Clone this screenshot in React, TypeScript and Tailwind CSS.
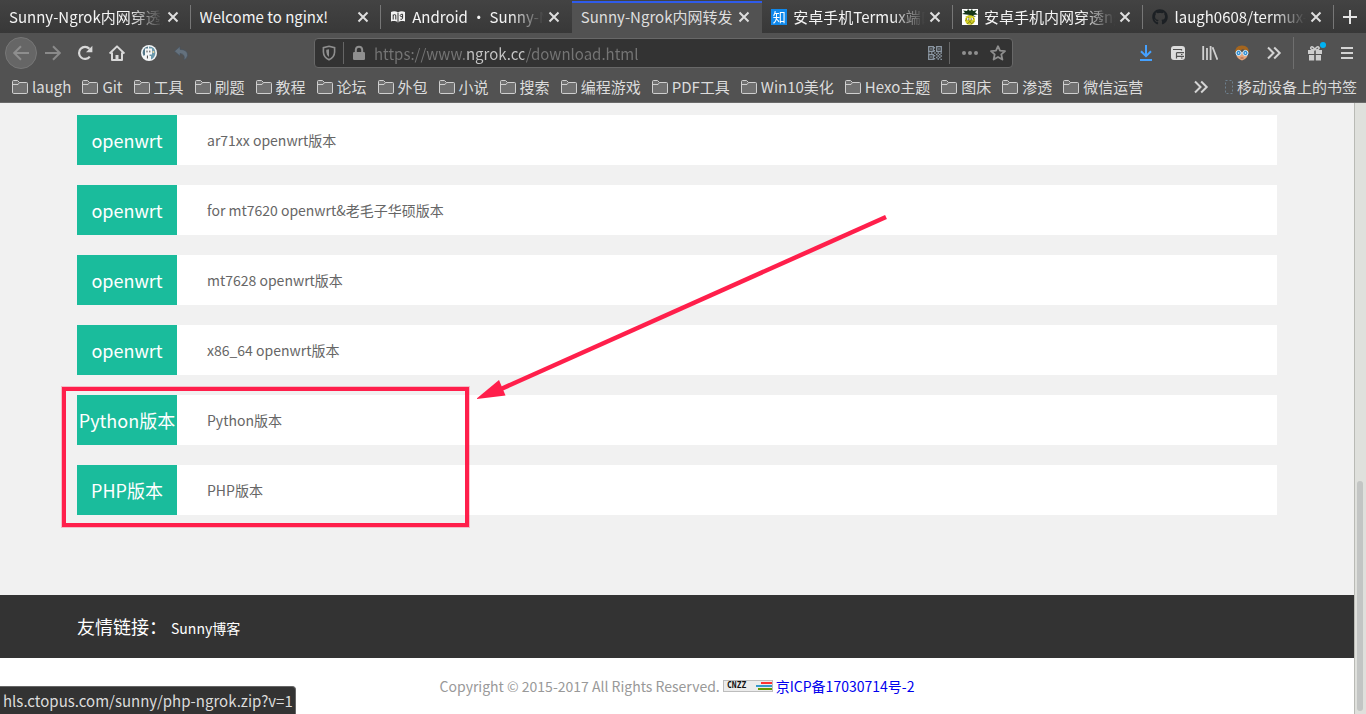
import React from "react"
import { FaGithub } from "react-icons/fa"

const tabs = [
    { title: 'Sunny-Ngrok内网穿透用', icon: '', active: false, fade: true },
    { title: 'Welcome to nginx!', icon: '', active: false, fade: false },
    { title: 'Android ・ Sunny-N', icon: 'book', active: false, fade: true },
    { title: 'Sunny-Ngrok内网转发', icon: '', active: true, fade: false },
    { title: '安卓手机Termux端口', icon: 'zhihu', active: false, fade: true },
    { title: '安卓手机内网穿透ng', icon: 'pineapple', active: false, fade: true },
    { title: 'laugh0608/termux-', icon: 'github', active: false, fade: true },
]

const bookmarks = [
    'laugh', 'Git', '工具', '刷题', '教程', '论坛', '外包', '小说', '搜索',
    '编程游戏', 'PDF工具', 'Win10美化', 'Hexo主题', '图床', '渗透', '微信运营',
]

const downloads = [
    { label: 'openwrt', text: 'ar71xx openwrt版本' },
    { label: 'openwrt', text: 'for mt7620 openwrt&老毛子华硕版本' },
    { label: 'openwrt', text: 'mt7628 openwrt版本' },
    { label: 'openwrt', text: 'x86_64 openwrt版本' },
    { label: 'Python版本', text: 'Python版本' },
    { label: 'PHP版本', text: 'PHP版本' },
]

const TabIcon = ({ name }: { name: string }) => {
    if (name === 'book') {
        return (
            <svg width="16" height="16" viewBox="0 0 16 16" className="shrink-0">
                <path d="M1 3C3.5 2 6 2.200 8 3.500C10 2.200 12.500 2 15 3V12.500C12.500 11.800 10 12 8 13.400C6 12 3.500 11.800 1 12.500Z" fill="#f2f2f2" />
                <path d="M3.200 10.500V5.500M3.200 6.500Q5.800 4.300 5.800 7V10.500M8 4V13M12.600 7.600Q10.200 8.300 10.200 6.500Q10.400 4.900 12.600 5.200V9.200Q12.400 10.800 10.400 10.200" fill="none" stroke="#333" strokeWidth="1" />
            </svg>
        )
    }
    if (name === 'zhihu') {
        return <span className="w-4 h-4 shrink-0 bg-[#0f88eb] text-white text-[13px] leading-4 text-center">知</span>
    }
    if (name === 'pineapple') {
        return (
            <svg width="16" height="16" viewBox="0 0 16 16" className="shrink-0">
                <rect width="16" height="16" fill="#fff" />
                <path d="M8 6L0 5L3 3.4L1 1.4L5 2L6 0L8 2L10 0L11 2L15 1L13 3.4L16 5.4L11 6L14 8L9 7L3 8Z" fill="#14351a" />
                <ellipse cx="8" cy="11" rx="5" ry="4.8" fill="#d5cf22" />
                <path d="M3.4 12L7 8M5 15L12 9M9 15.5L12.4 12M4.4 9L10 15" stroke="#7f8316" strokeWidth=".9" />
                <circle cx="6.2" cy="10" r="1.2" fill="#fff" />
                <circle cx="9.8" cy="10" r="1.2" fill="#fff" />
                <circle cx="6.4" cy="10" r=".6" fill="#222" />
                <circle cx="9.6" cy="10" r=".6" fill="#222" />
            </svg>
        )
    }
    if (name === 'github') {
        return <FaGithub size={16} className="shrink-0 text-[#1c2024]" />
    }
    return null
}

const CloseIcon = () => (
    <svg width="12" height="12" viewBox="0 0 12 12" fill="none" stroke="currentColor" strokeWidth="2">
        <path d="M1.5 1.5L10.5 10.5M10.5 1.5L1.5 10.5" />
    </svg>
)

const ChevronsIcon = () => (
    <svg width="16" height="16" viewBox="0 0 16 16" fill="none" stroke="#d4d4d4" strokeWidth="2">
        <path d="M2 2.5L7.5 8L2 13.5M8.2 2.5L13.7 8L8.2 13.5" />
    </svg>
)

const FolderIcon = () => (
    <svg width="16" height="16" viewBox="0 0 16 16" fill="#707070" stroke="#cfcfcf" className="shrink-0">
        <path d="M.5 13V2.5Q.5 1.5 1.5 1.5H5.5L7.5 3.5H14.5Q15.5 3.5 15.5 4.5V13Q15.5 14.5 14.5 14.5H1.5Q.5 14.5 .5 13Z" />
        <path d="M.5 5.5H6L7.5 3.5" fill="none" />
    </svg>
)

const ToolButton = ({ label, children }: { label: string, children: React.ReactNode }) => (
    <button aria-label={label} className="w-8 h-8 shrink-0 flex items-center justify-center">
        {children}
    </button>
)

const TabStrip = () => {
    return (
        <div className="h-[33px] flex bg-linear-to-b from-[#434343] to-[#383838] text-[#f4f4f4]">
            {tabs.map((tab, i) => (
                <div
                    key={tab.title}
                    className={tab.active
                        ? "flex-1 min-w-0 flex items-center pl-[9px] pr-2 mt-px pb-[3px] bg-[#525252] border-t-2 border-[#2f5bea] text-[#dedede]"
                        : "flex-1 min-w-0 flex items-center pl-[9px] pr-2"}
                >
                    <div className={tab.fade
                        ? "flex-1 min-w-0 overflow-hidden flex items-center gap-[6px] mask-r-from-[78%] mask-r-to-100%"
                        : "flex-1 min-w-0 overflow-hidden flex items-center gap-[6px]"}
                    >
                        <TabIcon name={tab.icon} />
                        <span className="whitespace-nowrap leading-6">{tab.title}</span>
                    </div>
                    <button aria-label="关闭标签页" className="w-5 h-5 shrink-0 flex items-center justify-center text-[#dedede]">
                        <CloseIcon />
                    </button>
                    {i !== 2 && i !== 3 && <div className="w-px h-6 -mr-2 ml-[7px] bg-[#777]"></div>}
                </div>
            ))}
            <button aria-label="新建标签页" className="w-8 shrink-0 flex items-center justify-center">
                <svg width="14" height="14" viewBox="0 0 14 14" stroke="#e4e4e4" strokeWidth="2">
                    <path d="M7 0V14M0 7H14" />
                </svg>
            </button>
        </div>
    )
}

const UrlBar = () => {
    return (
        <div className="flex-1 min-w-0 mx-[117px] h-[30px] flex items-center bg-[#333] border border-[#686868] rounded-[4px] text-[#8f8f8f]">
            <svg width="14" height="16" viewBox="0 0 14 16" fill="none" stroke="currentColor" strokeWidth="1.6" className="ml-[7px] shrink-0">
                <path d="M7 1.2L12.6 2.6V7Q12.4 12.4 7 14.8Q1.6 12.4 1.4 7V2.6Z" />
                <path d="M7 4.2V12Q4.4 10.4 4.3 7V4.8Z" fill="currentColor" stroke="none" />
            </svg>
            <div className="w-px h-[22px] mx-[7px] bg-[#666]"></div>
            <svg width="16" height="16" viewBox="0 0 16 16" className="shrink-0">
                <rect x="2" y="7" width="12" height="8" rx="1.2" fill="currentColor" />
                <path d="M4.8 8V4.8Q5 1.8 8 1.8Q11 1.8 11.2 4.8V8" fill="none" stroke="currentColor" strokeWidth="2" />
            </svg>
            <input
                type="text"
                aria-label="网址"
                defaultValue="https://www.ngrok.cc/download.html"
                className="flex-1 min-w-0 ml-[7px] h-6 outline-none bg-clip-text text-transparent bg-[linear-gradient(to_right,#757575_91px,#c6c6c6_91px,#c6c6c6_150px,#757575_150px)]"
            />
            <button aria-label="二维码" className="shrink-0">
                <svg width="16" height="16" viewBox="0 0 16 16" fill="none" stroke="#8b97a3" strokeWidth="1.3">
                    <path d="M1.7 1.7H6.3V6.3H1.7ZM9.7 1.7H14.3V6.3H9.7ZM1.7 9.7H6.3V14.3H1.7Z" />
                    <path d="M3.3 4H4.7M11.3 4H12.7M3.3 12H4.7M9 9.5H10.5M12 9.5H13.5M10.5 11H12M13.5 11H15M9 12.5H10.5M12 12.5H13.5M10.5 14H12M13.5 14.3H15M7.4 2V3.4M7.4 5V6.5M1 8H2.5M4 8H5.5M7.2 8H8.7M10.5 8H12M13.5 8H15M7.6 10V11.4M7.6 13V14.6" />
                </svg>
            </button>
            <div className="w-px h-[22px] ml-[6px] bg-[#666]"></div>
            <button aria-label="页面操作" className="ml-3 shrink-0">
                <svg width="16" height="16" viewBox="0 0 16 16" fill="currentColor">
                    <circle cx="2" cy="8" r="2" />
                    <circle cx="8" cy="8" r="2" />
                    <circle cx="14" cy="8" r="2" />
                </svg>
            </button>
            <button aria-label="收藏" className="ml-3 mr-[6px] shrink-0">
                <svg width="16" height="16" viewBox="0 0 16 16" fill="none" stroke="currentColor" strokeWidth="1.8" strokeLinejoin="round">
                    <path d="M8 1.2L10 5.6L15 6.1L11.3 9.4L12.4 14.6L8 12L3.6 14.6L4.7 9.4L1 6.1L6 5.6Z" />
                </svg>
            </button>
        </div>
    )
}

const Toolbar = () => {
    return (
        <div className="h-10 flex items-center pl-[5px] pr-[3px]">
            <button aria-label="后退" className="w-8 h-8 shrink-0 flex items-center justify-center rounded-full bg-[#666] border border-[#777] text-[#8e8e8e]">
                <svg width="16" height="16" viewBox="0 0 16 16" fill="none" stroke="currentColor" strokeWidth="2">
                    <path d="M16 8H1.5M8 1.2L1.2 8L8 14.8" />
                </svg>
            </button>
            <ToolButton label="前进">
                <svg width="16" height="16" viewBox="0 0 16 16" fill="none" stroke="#8a8a8a" strokeWidth="2">
                    <path d="M0 8H14.5M8 1.2L14.8 8L8 14.8" />
                </svg>
            </ToolButton>
            <ToolButton label="刷新">
                <svg width="16" height="16" viewBox="0 0 16 16" fill="none" stroke="#d8d8d8" strokeWidth="2.2">
                    <path d="M12.8 11.6A6 6 0 1 1 12.4 3.8" />
                    <path d="M15.4 .8V7.2H9Z" fill="#d8d8d8" stroke="none" />
                </svg>
            </ToolButton>
            <ToolButton label="主页">
                <svg width="16" height="16" viewBox="0 0 16 16" fill="none" stroke="#d8d8d8" strokeWidth="2" strokeLinejoin="round">
                    <path d="M.6 8.6L8 1.4L15.4 8.6M3 7.5V15H13V7.5" />
                    <path d="M8 15V10" strokeWidth="3" />
                </svg>
            </ToolButton>
            <ToolButton label="用户">
                <svg width="16" height="16" viewBox="0 0 16 16">
                    <circle cx="8" cy="8" r="8" fill="#f4f6f7" />
                    <path d="M8 1.600Q14.400 2 14.400 8Q14 13 10 14.400V11H8.600V9.400H11V3.600H8Z" fill="#6b98ab" />
                    <path d="M7 1.600Q1.800 2.800 1.600 8L2.600 11L4 10V3.600H7Z" fill="#547889" />
                    <path d="M6 5.600V7.400M8.800 5.600V7.400M6.400 10.500V13.500" stroke="#444" strokeWidth="1" />
                    <circle cx="12.400" cy="7" r="1" fill="#ead9a0" />
                </svg>
            </ToolButton>
            <ToolButton label="撤销">
                <svg width="16" height="16" viewBox="0 0 16 16">
                    <path d="M1.5 6.2L7 1.5V4.4Q14.8 4.6 14.6 10.4Q14.2 13.4 11 15Q12.6 9 7 8.4V11Z" fill="#64717d" stroke="#46535f" strokeWidth=".6" />
                </svg>
            </ToolButton>
            <UrlBar />
            <ToolButton label="下载">
                <svg width="16" height="16" viewBox="0 0 16 16" fill="none" stroke="#45a1ff" strokeWidth="2">
                    <path d="M8 0V11M3 6.2L8 11.2L13 6.2M2 15H14" />
                </svg>
            </ToolButton>
            <ToolButton label="阅读列表">
                <svg width="16" height="16" viewBox="0 0 16 16">
                    <path d="M4 1H12Q15 1 15 4V12Q15 15 12 15H4Q1 15 1 12V4Q1 1 4 1Z" fill="#dcdcdc" />
                    <path d="M3 4.500H11.500V5.500M6.500 7.700H14M6.500 11.300H14M6.500 7.700V13.500" stroke="#505050" strokeWidth="1.200" fill="none" />
                    <path d="M11 9.500H12.500M11 13H12.500" stroke="#505050" strokeWidth="1" />
                </svg>
            </ToolButton>
            <ToolButton label="书库">
                <svg width="16" height="16" viewBox="0 0 16 16" stroke="#d0d0d0" strokeWidth="1.8">
                    <path d="M1.2 1V15M5 3V15M8.6 1V15M10.6 2.2L15.4 14.8" />
                </svg>
            </ToolButton>
            <ToolButton label="账户">
                <svg width="16" height="16" viewBox="0 0 16 16">
                    <path d="M2 7H14Q14 12 11 14L8 15.600L5 14Q2 12 2 7Z" fill="#e5a57a" />
                    <path d="M1.200 8Q.6 1 8 .6Q15.400 1 14.800 8L13 6Q10.500 5.600 9 4Q6.500 6 3 6Z" fill="#a4651e" />
                    <circle cx="4.600" cy="8" r="2.600" fill="#2688cf" stroke="#d8efff" strokeWidth="1" />
                    <circle cx="11.400" cy="8" r="2.600" fill="#2688cf" stroke="#d8efff" strokeWidth="1" />
                    <circle cx="4.600" cy="8" r=".8" fill="#fff" />
                    <circle cx="11.400" cy="8" r=".8" fill="#fff" />
                    <path d="M6.500 13H9.500" stroke="#9d5b45" />
                </svg>
            </ToolButton>
            <ToolButton label="更多工具">
                <ChevronsIcon />
            </ToolButton>
            <div className="w-px h-8 ml-[3px] mr-[5px] bg-[#6f6f6f]"></div>
            <ToolButton label="新特性">
                <span className="relative">
                    <svg width="16" height="16" viewBox="0 0 16 16" fill="#cdcdcd">
                        <path d="M1 5H7.2V9H1ZM8.8 5H15V9H8.8ZM2 10H7.2V15.5H2ZM8.8 10H14V15.5H8.8Z" />
                        <path d="M7.5 5Q3 4.6 3.8 2.4Q5.4 .6 7.8 4.4Q10.4 .6 12 2.4Q12.8 4.6 8.5 5" fill="none" stroke="#cdcdcd" strokeWidth="1.5" />
                    </svg>
                    <span className="absolute -top-[3px] -right-[3px] w-[6px] h-[6px] rounded-full bg-[#00b3f4]"></span>
                </span>
            </ToolButton>
            <ToolButton label="菜单">
                <svg width="16" height="16" viewBox="0 0 16 16" stroke="#d4d4d4" strokeWidth="2">
                    <path d="M2 3H14M2 8H14M2 13H14" />
                </svg>
            </ToolButton>
        </div>
    )
}

const BookmarksBar = () => {
    return (
        <div className="h-[30px] flex items-center pl-3 pr-[9px] pb-[2px] border-b border-[#6a6a6a] text-[#dcdcdc]">
            <div className="flex-1 min-w-0 flex items-center gap-[11px]">
                {bookmarks.map((name) => (
                    <button key={name} className="flex items-center gap-1 whitespace-nowrap leading-6">
                        <FolderIcon />
                        {name}
                    </button>
                ))}
            </div>
            <button aria-label="更多书签" className="mr-4">
                <ChevronsIcon />
            </button>
            <button className="shrink-0 flex items-center gap-1 whitespace-nowrap leading-6">
                <svg width="8" height="14" viewBox="0 0 8 14" fill="none" stroke="#6d7f8d" strokeDasharray="2 2">
                    <rect x=".5" y=".5" width="7" height="13" />
                </svg>
                移动设备上的书签
            </button>
        </div>
    )
}

const Downloads = () => {
    return (
        <main className="bg-[#f1f1f1] pt-3 pb-20">
            <div className="relative max-w-[1200px] mx-auto">
                <ul className="flex flex-col gap-5">
                    {downloads.map((item) => (
                        <li key={item.text}>
                            <a href="#" className="h-[50px] flex items-center bg-white text-[#666]">
                                <span className="w-[100px] h-[50px] bg-[#1abc9c] text-white text-lg leading-[50px] text-center whitespace-nowrap">{item.label}</span>
                                <span className="pl-[30px] text-sm">{item.text}</span>
                            </a>
                        </li>
                    ))}
                </ul>
                {/* red marks over the last two downloads */}
                <div className="absolute -left-[15px] -bottom-3 w-[407px] h-[140px] border-4 border-[#ff1f4b] ring-1 ring-[#ff1f4b]/25"></div>
                <svg width="420" height="200" viewBox="0 0 420 200" className="absolute left-[400px] top-[96px]">
                    <path d="M409 6L24 178" stroke="#ff1f4b" strokeWidth="4.5" />
                    <path d="M-1 188L22 169L28.5 184.5Z" fill="#ff1f4b" />
                </svg>
            </div>
        </main>
    )
}

const Footer = () => {
    return (
        <footer>
            <div className="bg-[#333] text-white">
                <div className="max-w-[1200px] h-[63px] mx-auto flex items-baseline pt-[17px]">
                    <span className="text-lg">友情链接：</span>
                    <a href="#" className="ml-1 text-sm">Sunny博客</a>
                </div>
            </div>
            <div className="h-14 flex items-center justify-center gap-[3px] text-sm text-[#999]">
                <span>Copyright © 2015-2017 All Rights Reserved.</span>
                <a href="#" aria-label="站长统计">
                    <svg width="50" height="12" viewBox="0 0 50 12">
                        <rect x=".5" y=".5" width="49" height="11" fill="#ececec" stroke="#bdbdbd" />
                        <text x="4" y="8" fontSize="8" fontWeight="700" fill="#111" fontFamily="DejaVu Sans Mono, monospace">CNZZ</text>
                        <path d="M38 3H49" stroke="#f33" strokeWidth="2" />
                        <path d="M33 6H49" stroke="#39c" strokeWidth="2" />
                        <path d="M35 9H49" stroke="#690" strokeWidth="2" />
                    </svg>
                </a>
                <a href="#" className="text-[#0000ee]">京ICP备17030714号-2</a>
            </div>
        </footer>
    )
}

const App = () => {
    return (
        <div className="relative min-h-screen flex flex-col bg-white text-[15px] font-['Noto_Sans_CJK_SC',sans-serif]">
            <header className="bg-[#525252]">
                <TabStrip />
                <Toolbar />
                <BookmarksBar />
            </header>
            <div className="flex-1 flex">
                <div className="flex-1 min-w-0">
                    <Downloads />
                    <Footer />
                </div>
                <div className="w-3 shrink-0 flex flex-col justify-end pl-[2px] pb-[3px] border-l border-[#b9bab5] bg-[#dfe0dc]">
                    <div className="w-[6px] h-[230px] rounded-full bg-[#c3c5c4]"></div>
                </div>
            </div>
            <div className="absolute left-0 bottom-0 h-7 pl-[3px] pr-[2px] leading-7 bg-[#333] border-t border-r border-[#666] rounded-tr-[4px] text-[#dcdcdc]">
                hls.ctopus.com/sunny/php-ngrok.zip?v=1
            </div>
        </div>
    )
}

export default App
